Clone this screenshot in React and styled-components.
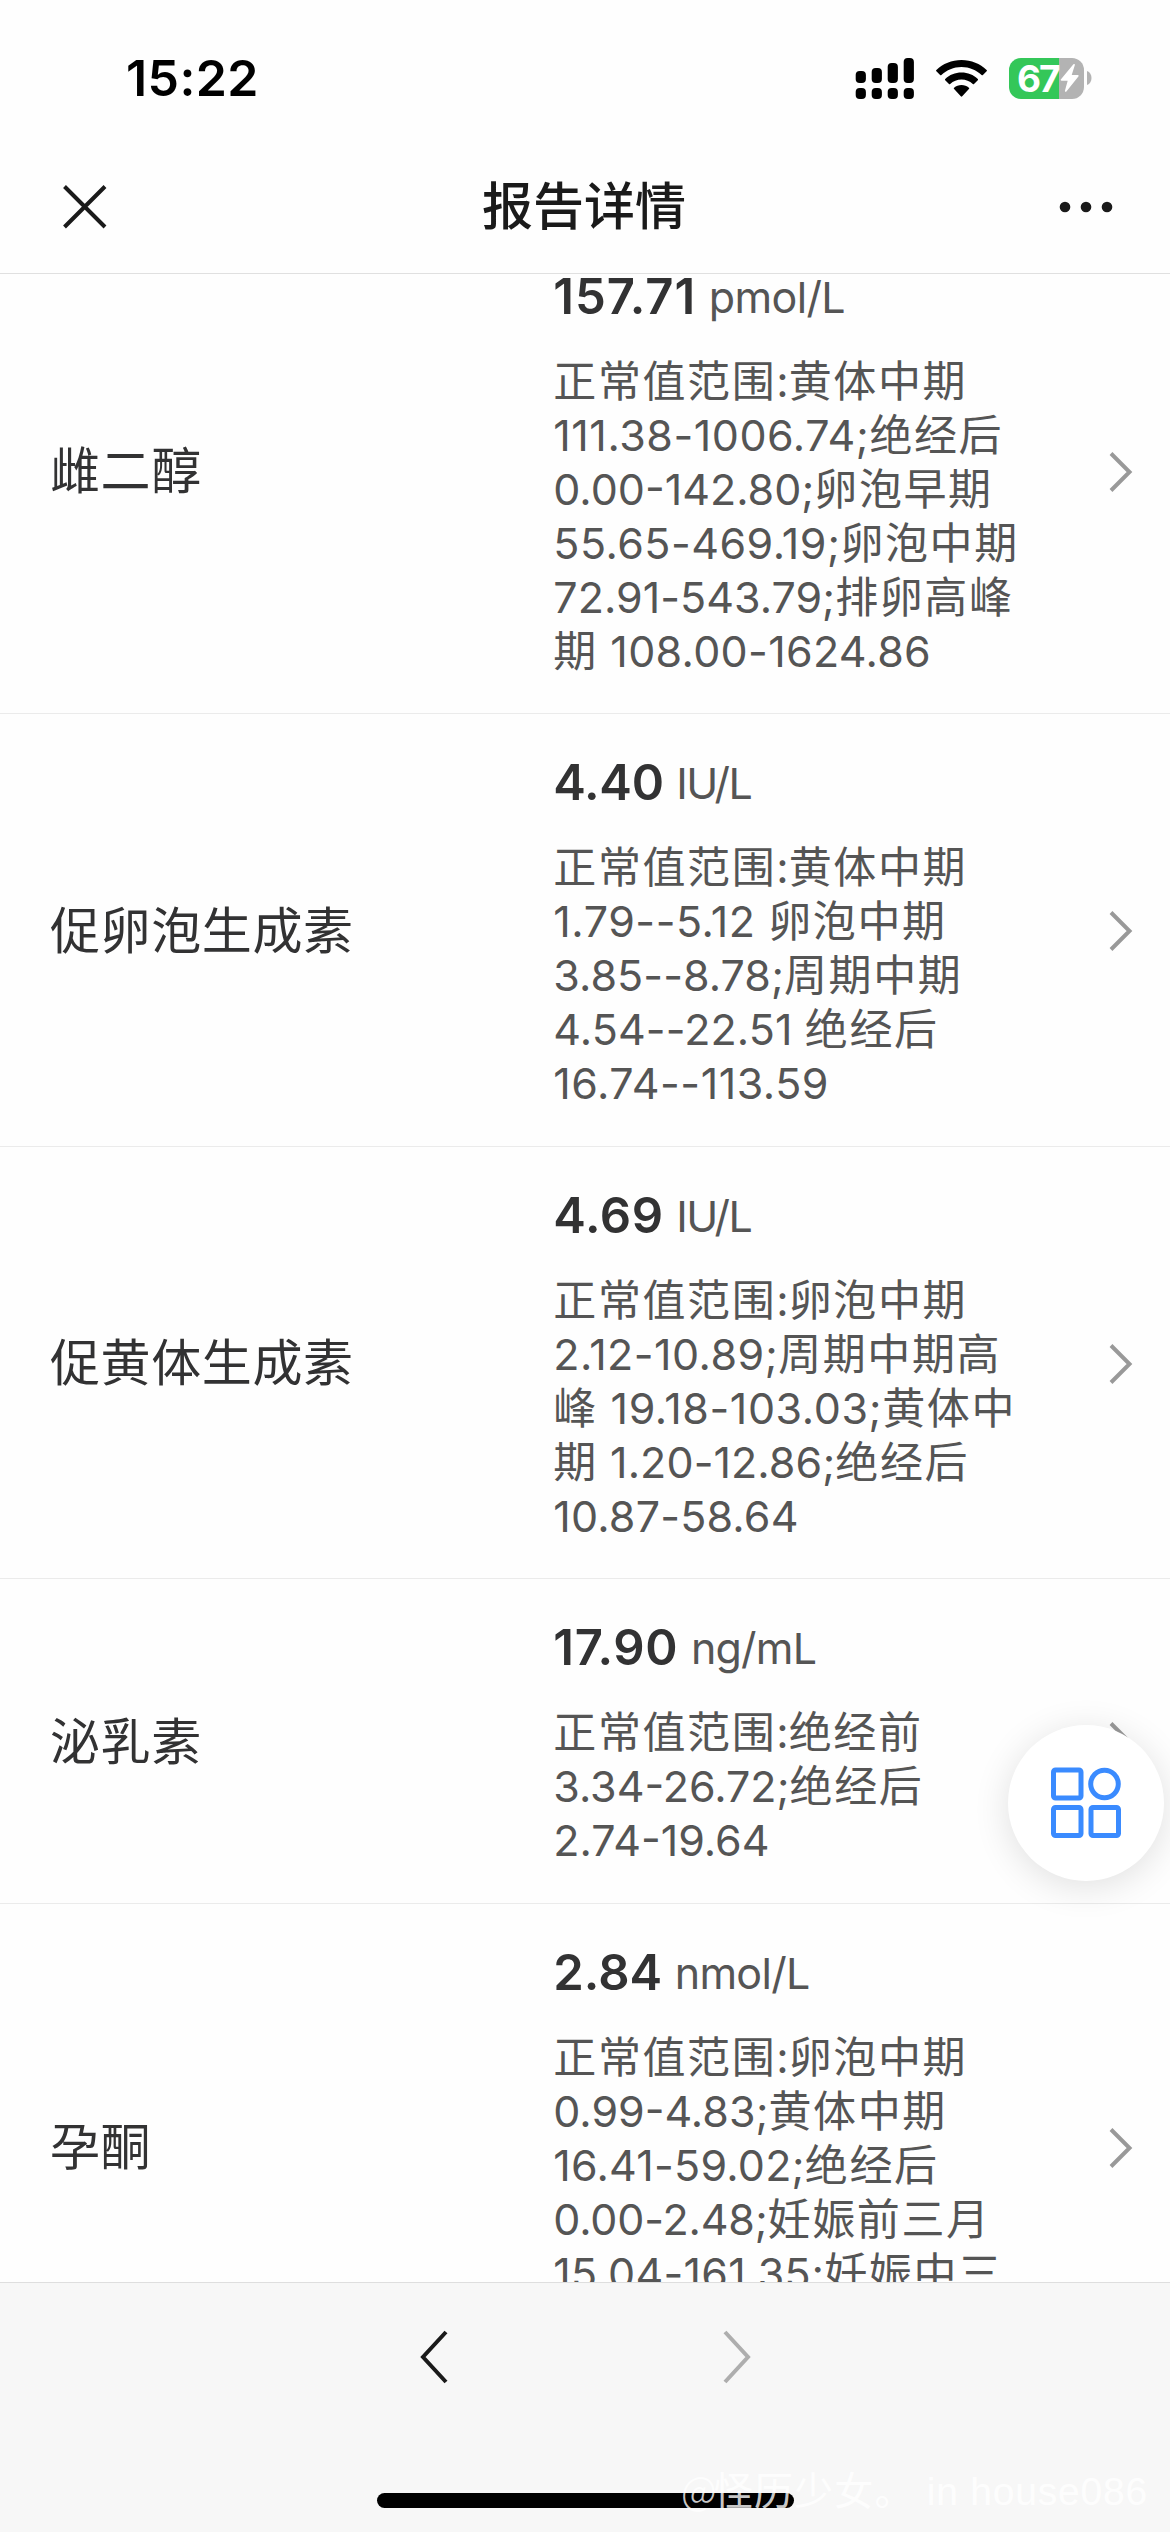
import React from "react";
import styled, { createGlobalStyle } from "styled-components";

const Global = createGlobalStyle`
  * { box-sizing: border-box; }
  body { margin: 0; background: #fff; }
`;

const Screen = styled.div`
  position: relative;
  width: 1170px;
  height: 2532px;
  display: flex;
  flex-direction: column;
  overflow: hidden;
  background: #fefefe;
  font-family: Inter, "Noto Sans CJK SC", sans-serif;
  color: #323233;
`;

const StatusBar = styled.header`
  flex: none;
  height: 156px;
  padding: 0 78px 0 126px;
  display: flex;
  align-items: center;
  justify-content: space-between;
`;

const Clock = styled.time`
  font-size: 50px;
  line-height: 60px;
  font-weight: 600;
  color: #000;
  letter-spacing: 0.4px;
`;

const StatusIcons = styled.div`
  display: flex;
  align-items: center;
  gap: 22px;
`;

const Battery = styled.div`
  display: flex;
  align-items: center;
  gap: 3px;
`;

const BatteryBody = styled.div`
  width: 75px;
  height: 41px;
  border-radius: 12px;
  padding-left: 8px;
  display: flex;
  align-items: center;
  background: linear-gradient(to right, #34c759 50px, #b3b3b3 50px);
  color: #fff;
  font-size: 37px;
  line-height: 41px;
  font-weight: 700;
  letter-spacing: -2px;
`;

const BoltIcon = styled.svg`
  flex: none;
  margin-left: 1px;
`;

const NavBar = styled.nav`
  flex: none;
  height: 118px;
  padding: 0 57px 16px 62px;
  display: grid;
  grid-template-columns: 60px 1fr 67px;
  align-items: center;
  border-bottom: 1px solid #e0e0e0;
`;

const MoreIcon = styled.svg`
  justify-self: end;
`;

const Title = styled.h1`
  margin: 0;
  text-align: center;
  font-size: 51px;
  line-height: 60px;
  font-weight: 500;
  color: #1a1a1a;
`;

const List = styled.main`
  flex: 1;
  min-height: 0;
  overflow: hidden;
`;

const Rows = styled.div`
  margin-top: -46.4px;
`;

const Row = styled.section`
  display: grid;
  grid-template-columns: 503.3px 510px 1fr;
  align-items: center;
  padding: 42px 36px 35.6px 50px;
  border-bottom: 1px solid #ebebeb;
`;

const Name = styled.h2`
  margin: 0 0 5px;
  font-size: 50px;
  line-height: 60px;
  font-weight: 400;
  letter-spacing: 0.6px;
`;

const Reading = styled.div`
  height: 54px;
  display: flex;
  align-items: center;
  gap: 12.5px;
  margin-bottom: 30px;
  line-height: 54px;
`;

const Value = styled.strong`
  font-size: 49px;
  font-weight: 600;
  letter-spacing: ${(p) => p.$tracking}px;
`;

const Unit = styled.span`
  font-size: 43px;
  color: #555;
  letter-spacing: ${(p) => p.$tracking}px;
`;

const Range = styled.div`
  font-size: 43px;
  line-height: 54px;
  color: #555;
`;

const Line = styled.div`
  height: 54px;
  white-space: pre;
  letter-spacing: ${(p) => p.$tracking}px;
`;

const Han = styled.span`
  font-family: "Noto Sans CJK SC", sans-serif;
  line-height: 0;
  letter-spacing: 1.6px;
`;

const Arrow = styled.svg`
  justify-self: end;
  display: block;
  margin-bottom: 4px;
`;

const Toolbar = styled.footer`
  flex: none;
  height: 250px;
  display: flex;
  flex-direction: column;
  align-items: center;
  justify-content: space-between;
  padding: 47px 0 24px;
  background: #f7f7f7;
  border-top: 1px solid #dedede;
`;

const Pager = styled.div`
  display: flex;
  gap: 275px;
`;

const HomeIndicator = styled.div`
  width: 417px;
  height: 15px;
  border-radius: 8px;
  background: #000;
`;

const Fab = styled.button`
  position: absolute;
  left: 1008px;
  top: 1725px;
  width: 156px;
  height: 156px;
  padding: 0;
  border: 0;
  border-radius: 50%;
  display: grid;
  place-items: center;
  background: #fff;
  box-shadow: 0 6px 36px rgba(0, 0, 0, 0.12);
`;

const Watermark = styled.div`
  position: absolute;
  left: 681px;
  bottom: 11px;
  display: flex;
  align-items: baseline;
  font-family: "Noto Sans CJK SC", sans-serif;
  font-size: 39px;
  line-height: 58px;
  letter-spacing: 1.2px;
  white-space: pre;
  color: rgba(255, 255, 255, 0.8);
`;

const Handle = styled.span`
  margin: 0 12px 0 -4px;
`;

const AtSign = styled.span`
  font-weight: 300;
`;

const Account = styled.span`
  font-family: "Liberation Sans", sans-serif;
  font-size: 39px;
  letter-spacing: 0.8px;
`;

const results = [
  {
    name: "雌二醇", value: "157.71", tracking: 0.95, unit: "pmol/L", unitTracking: -0.6,
    range: [["正常值范围:黄体中期", 0], ["111.38-1006.74;绝经后", 0.54], ["0.00-142.80;卵泡早期", 0], ["55.65-469.19;卵泡中期", 0.48], ["72.91-543.79;排卵高峰", 0.03], ["期 108.00-1624.86", 0.32]],
  },
  {
    name: "促卵泡生成素", value: "4.40", tracking: -0.3, unit: "IU/L", unitTracking: -1.4,
    range: [["正常值范围:黄体中期", 0], ["1.79--5.12 卵泡中期", 0.55], ["3.85--8.78;周期中期", 0.06], ["4.54--22.51 绝经后", 0.12], ["16.74--113.59", 0.53]],
  },
  {
    name: "促黄体生成素", value: "4.69", tracking: 0.6, unit: "IU/L", unitTracking: -1.4,
    range: [["正常值范围:卵泡中期", 0], ["2.12-10.89;周期中期高", 0.48], ["峰 19.18-103.03;黄体中", 0.6], ["期 1.20-12.86;绝经后", 0.08], ["10.87-58.64", 0.2]],
  },
  {
    name: "泌乳素", value: "17.90", tracking: 0.7, unit: "ng/mL", unitTracking: -0.8,
    range: [["正常值范围:绝经前", 0], ["3.34-26.72;绝经后", 0], ["2.74-19.64", 0]],
  },
  {
    name: "孕酮", value: "2.84", tracking: 0, unit: "nmol/L", unitTracking: -0.7,
    range: [["正常值范围:卵泡中期", 0], ["0.99-4.83;黄体中期", 0], ["16.41-59.02;绝经后", 0.24], ["0.00-2.48;妊娠前三月", -0.16], ["15.04-161.35;妊娠中三", 0.3], ["月", 0]],
  },
];

const runs = (text) => text.match(/[\u4e00-\u9fff]+|[^\u4e00-\u9fff]+/g);

function RangeLine({ text, tracking }) {
  return (
    <Line $tracking={tracking}>
      {runs(text).map((run, i) => (/[\u4e00-\u9fff]/.test(run) ? <Han key={i}>{run}</Han> : run))}
    </Line>
  );
}

function ResultRow({ item }) {
  return (
    <Row>
      <Name>{item.name}</Name>
      <div>
        <Reading>
          <Value $tracking={item.tracking}>{item.value}</Value>
          <Unit $tracking={item.unitTracking}>{item.unit}</Unit>
        </Reading>
        <Range>
          {item.range.map(([text, tracking]) => <RangeLine key={text} text={text} tracking={tracking} />)}
        </Range>
      </div>
      <Arrow width="26" height="42" viewBox="0 0 26 42" fill="none" stroke="#999" strokeWidth="4">
        <path d="M3 2.5 21.5 21 3 39.5" />
      </Arrow>
    </Row>
  );
}

export default function App() {
  return (
    <>
      <Global />
      <Screen>
        <StatusBar>
          <Clock>15:22</Clock>
          <StatusIcons>
            <svg width="59" height="41" viewBox="0 0 59 41">
              {[13, 10, 5, 0].map((top, i) => (
                <g key={top}>
                  <rect x={i * 16 + 0.7} y={top} width="10.2" height={25 - top} rx="4" />
                  <rect x={i * 16 + 0.7} y="30" width="10.2" height="11" rx="4" />
                </g>
              ))}
            </svg>
            <svg width="51" height="37" viewBox="0 0 51 37">
              <path d="M25.5 0C35.3 0 44.200 3.800 50.600 10a.9.900 0 0 1 0 1.300L46.900 15a.9.900 0 0 1-1.300 0C40.300 10 33.300 7 25.500 7S10.700 10 5.400 15a.9.900 0 0 1-1.300 0L.4 11.300a.9.900 0 0 1 0-1.300C6.800 3.800 15.700 0 25.500 0Z" />
              <path d="M25.500 12.500c6.300 0 12 2.400 16.300 6.400a.9.900 0 0 1 0 1.300l-3.800 3.800a.9.900 0 0 1-1.200 0c-3-2.800-7-4.500-11.300-4.500s-8.300 1.700-11.300 4.500a.9.900 0 0 1-1.200 0l-3.800-3.800a.9.900 0 0 1 0-1.300c4.300-4 10-6.400 16.300-6.400Z" />
              <path d="M25.500 25c2.800 0 5.400 1 7.400 2.700.4.400.4 1 0 1.400l-6.700 7.200a.9.900 0 0 1-1.400 0l-6.700-7.200c-.4-.4-.4-1 0-1.400C20.100 26 22.700 25 25.500 25Z" />
            </svg>
            <Battery>
              <BatteryBody>
                67
                <BoltIcon width="19" height="28" viewBox="0 0 19 28" fill="#fff">
                  <path d="M13.200.4 1 15.200c-.6.700-.2 1.500.7 1.500h6L5 26.400c-.4 1.300.7 1.900 1.600.9L18.400 12.600c.6-.8.200-1.500-.7-1.500h-6l3.100-9.800c.4-1.200-.7-1.800-1.600-.9Z" />
                </BoltIcon>
              </BatteryBody>
              <svg width="5" height="14" viewBox="0 0 5 14" fill="#b3b3b3">
                <path d="M0 0c3 1 4.500 4 4.500 7S3 13 0 14Z" />
              </svg>
            </Battery>
          </StatusIcons>
        </StatusBar>
        <NavBar>
          <svg width="46" height="46" viewBox="0 0 46 46" fill="none" stroke="#1a1a1a" strokeWidth="4">
            <path d="M2.500 2.500 43 43M43 2.500 2.500 43" />
          </svg>
          <Title>报告详情</Title>
          <MoreIcon width="60" height="12" viewBox="0 0 60 12" fill="#1a1a1a">
            <circle cx="12" cy="6" r="5.300" />
            <circle cx="33" cy="6" r="5.300" />
            <circle cx="54" cy="6" r="5.300" />
          </MoreIcon>
        </NavBar>
        <List>
          <Rows>
            {results.map((item) => <ResultRow key={item.name} item={item} />)}
          </Rows>
        </List>
        <Toolbar>
          <Pager>
            <svg width="28" height="54" viewBox="0 0 28 54" fill="none" stroke="#1a1a1a" strokeWidth="4">
              <path d="M26 2 3 27 26 52" />
            </svg>
            <svg width="28" height="54" viewBox="0 0 28 54" fill="none" stroke="#aeaeae" strokeWidth="4">
              <path d="M2 2 25 27 2 52" />
            </svg>
          </Pager>
          <HomeIndicator />
        </Toolbar>
        <Fab aria-label="menu">
          <svg width="70" height="72" viewBox="0 0 70 72" fill="none" stroke="#3a8bff" strokeWidth="5">
            <rect x="2.500" y="3" width="27.500" height="28" rx="2" />
            <circle cx="53.500" cy="17" r="13.800" />
            <rect x="2.500" y="40.500" width="27.500" height="28" rx="2" />
            <rect x="40" y="40.500" width="27.500" height="28" rx="2" />
          </svg>
        </Fab>
        <Watermark>
          <AtSign>@</AtSign>
          <Handle>怪历少女。</Handle>
          <Account>in house086</Account>
        </Watermark>
      </Screen>
    </>
  );
}
